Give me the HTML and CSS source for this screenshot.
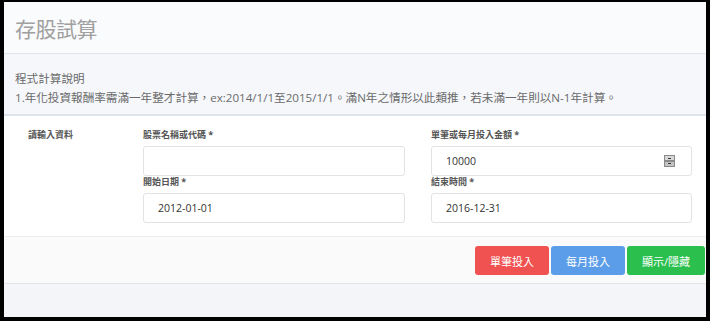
FILE: index.html
```html
<!DOCTYPE html>
<html lang="zh-Hant">

<head>
    <meta charset="UTF-8" />
    <title>存股試算</title>
    <link rel="stylesheet" href="styles.css">
</head>

<body>
    <div class="frame">
        <div class="page-header">
            <h1>存股試算</h1>
        </div>

        <div class="notes">
            <p>程式計算說明</p>
            <p>1.年化投資報酬率需滿一年整才計算，ex:2014/1/1至2015/1/1。滿N年之情形以此類推，若未滿一年則以N-1年計算。</p>
        </div>

        <div class="form-area">
            <div class="form-title">請輸入資料</div>
            <div class="form-col">
                <label class="field-label">股票名稱或代碼 *</label>
                <input class="field" type="text" value="" />
                <label class="field-label">開始日期 *</label>
                <input class="field" type="text" value="2012-01-01" />
            </div>
            <div class="form-col">
                <label class="field-label">單筆或每月投入金額 *</label>
                <div class="number-wrap">
                    <input class="field" type="text" value="10000" />
                    <svg class="spinner" width="11" height="12" viewBox="0 0 11 12">
                        <rect x="0.5" y="0.5" width="10" height="5" fill="#d8d8d8" stroke="#8a8a8a" />
                        <rect x="0.5" y="6.5" width="10" height="5" fill="#c4c4c4" stroke="#8a8a8a" />
                        <rect x="4" y="3" width="3" height="1" fill="#333" />
                        <rect x="4" y="8" width="3" height="1" fill="#333" />
                    </svg>
                </div>
                <label class="field-label">結束時間 *</label>
                <input class="field" type="text" value="2016-12-31" />
            </div>
        </div>

        <div class="actions">
            <button class="btn btn-red">單筆投入</button>
            <button class="btn btn-blue">每月投入</button>
            <button class="btn btn-green">顯示/隱藏</button>
        </div>

        <div class="page-bottom"></div>
    </div>
</body>

</html>
```

FILE: styles.css
```css
* {
    box-sizing: border-box;
    margin: 0;
    padding: 0;
}

body {
    font-family: "Open Sans", "Noto Sans CJK TC", sans-serif;
    background: #ffffff;
    color: #555;
}

.frame {
    width: 710px;
    height: 321px;
    border-style: solid;
    border-color: #000;
    border-width: 2px 4px 4px 4px;
    background: #f3f5f8;
    box-shadow: inset -1px -1px 0 #9a9a9a;
    display: flex;
    flex-direction: column;
    overflow: hidden;
}

.page-header {
    height: 52px;
    display: flex;
    align-items: center;
    padding-left: 11px;
    background: #fafbfc;
    border-bottom: 1px solid #dfe4ea;
}

.page-header h1 {
    font-size: 21px;
    font-weight: 400;
    color: #a0a0a0;
    letter-spacing: -0.5px;
}

.notes {
    padding: 15px 11px 7px;
    background: #f5f7fa;
    border-bottom: 2px solid #dde3ea;
    font-size: 11.6px;
    line-height: 19px;
    color: #6a6a6a;
}

.form-area {
    display: grid;
    grid-template-columns: 89px 262px 261px;
    column-gap: 26px;
    padding: 13px 14px 13px 24px;
    background: #ffffff;
    border-bottom: 1px solid #eeeeee;
}

.form-title {
    font-size: 9px;
    font-weight: 700;
    line-height: 12px;
    color: #555;
}

.form-col {
    display: flex;
    flex-direction: column;
}

.field-label {
    font-size: 9px;
    font-weight: 700;
    line-height: 12px;
    color: #555;
    margin-bottom: 5px;
}

.field {
    width: 100%;
    height: 30px;
    border: 1px solid #e3e3e3;
    border-radius: 3px;
    padding: 0 14px;
    font-family: "Open Sans", "Noto Sans CJK TC", sans-serif;
    font-size: 10.5px;
    color: #333;
    background: #fff;
}

.number-wrap {
    position: relative;
}

.spinner {
    position: absolute;
    right: 17px;
    top: 9px;
}

.actions {
    display: flex;
    justify-content: flex-end;
    gap: 2px;
    padding: 9px 1px 8px 0;
    background: #fafafa;
    border-bottom: 1px solid #e2e5e9;
}

.btn {
    height: 29px;
    padding: 0 15px;
    border: none;
    border-radius: 3px;
    font-family: "Open Sans", "Noto Sans CJK TC", sans-serif;
    font-size: 11px;
    color: #fff;
    cursor: pointer;
}

.btn-red {
    background: #f05252;
}

.btn-blue {
    background: #5b9de9;
}

.btn-green {
    background: #2bbf4e;
}

.page-bottom {
    flex: 1;
    background: #f3f5f8;
}
```
